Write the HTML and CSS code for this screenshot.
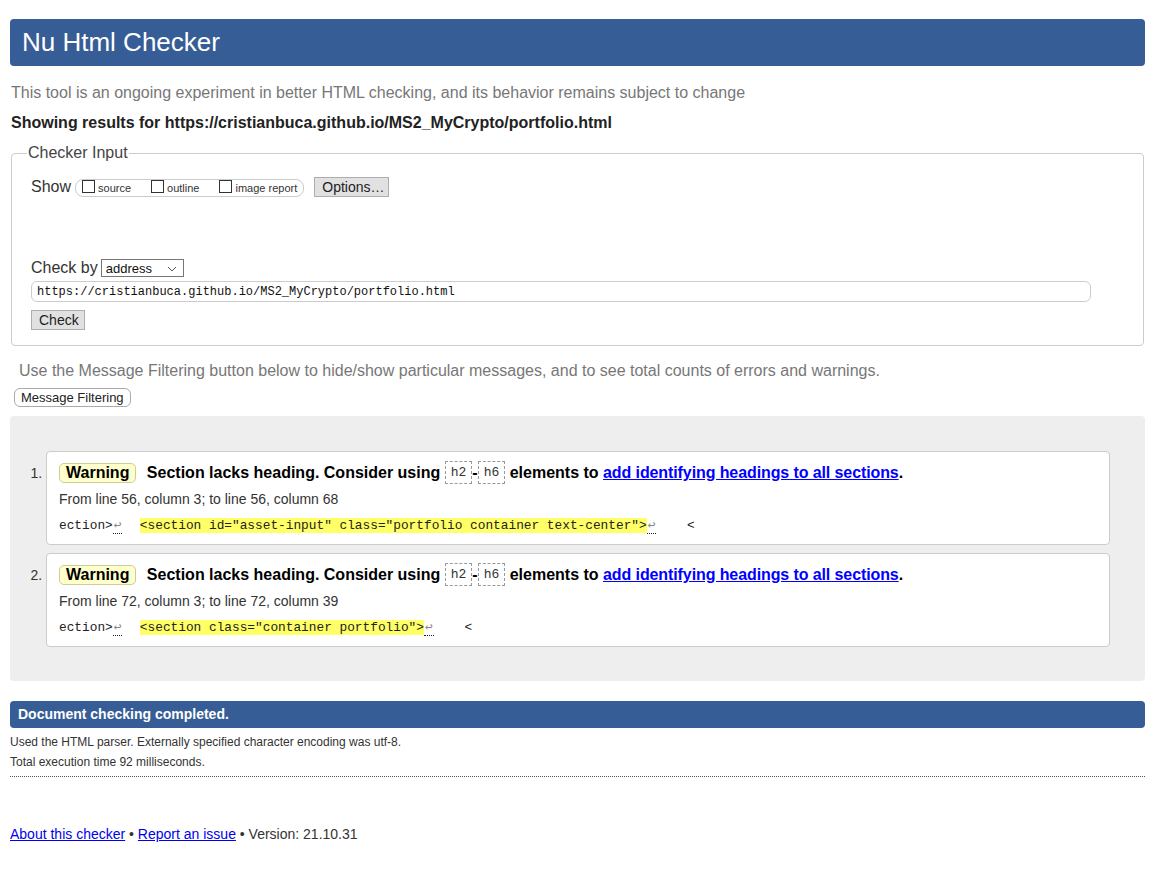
FILE: index.html
```html
<!DOCTYPE html>
<html lang="en">
<head>
<meta charset="utf-8">
<title>Nu Html Checker</title>
<link rel="stylesheet" href="styles.css">
</head>
<body>
<h1 class="title">Nu Html Checker</h1>
<p class="intro">This tool is an ongoing experiment in better HTML checking, and its behavior remains subject to change</p>
<p class="results-for">Showing results for https://cristianbuca.github.io/MS2_MyCrypto/portfolio.html</p>
<form class="checker-form">
  <fieldset class="checker-input">
    <legend>Checker Input</legend>
    <div class="show-row">
      <span class="show-label">Show</span>
      <span class="show-group">
        <label class="opt"><span class="box"></span>source</label>
        <label class="opt"><span class="box"></span>outline</label>
        <label class="opt"><span class="box"></span>image report</label>
      </span>
      <button type="button" class="btn">Options…</button>
    </div>
    <div class="checkby-row">
      <span class="checkby-label">Check by</span>
      <span class="select">address<svg class="chev" width="10" height="6" viewBox="0 0 10 6"><path d="M1 1l4 4 4-4" fill="none" stroke="#555" stroke-width="1"/></svg></span>
    </div>
    <div class="url">https://cristianbuca.github.io/MS2_MyCrypto/portfolio.html</div>
    <button type="button" class="btn check-btn">Check</button>
  </fieldset>
</form>
<p class="filter-note">Use the Message Filtering button below to hide/show particular messages, and to see total counts of errors and warnings.</p>
<button type="button" class="filter-btn">Message Filtering</button>
<div class="results">
  <ol class="messages">
    <li class="msg">
      <p class="msg-head"><span class="badge">Warning</span> <span>Section lacks heading. Consider using <code class="el">h2</code>-<code class="el">h6</code> elements to <a href="#">add identifying headings to all sections</a>.</span></p>
      <p class="loc">From line 56, column 3; to line 56, column 68</p>
      <p class="extract"><code>ection&gt;<span class="lf">↩</span>  <b class="hl">&lt;section id="asset-input" class="portfolio container text-center"&gt;</b><span class="lf">↩</span>    &lt;</code></p>
    </li>
    <li class="msg">
      <p class="msg-head"><span class="badge">Warning</span> <span>Section lacks heading. Consider using <code class="el">h2</code>-<code class="el">h6</code> elements to <a href="#">add identifying headings to all sections</a>.</span></p>
      <p class="loc">From line 72, column 3; to line 72, column 39</p>
      <p class="extract"><code>ection&gt;<span class="lf">↩</span>  <b class="hl">&lt;section class="container portfolio"&gt;</b><span class="lf">↩</span>    &lt;</code></p>
    </li>
  </ol>
</div>
<p class="done">Document checking completed.</p>
<div class="details">
  <p>Used the HTML parser. Externally specified character encoding was utf-8.</p>
  <p>Total execution time 92 milliseconds.</p>
</div>
<p class="footer"><a href="#">About this checker</a> • <a href="#">Report an issue</a> • Version: 21.10.31</p>
</body>
</html>
```
FILE: styles.css
```css
html, body { margin: 0; padding: 0; }
body {
  font-family: "Liberation Sans", Arial, sans-serif;
  color: #222;
  background: #fff;
  padding: 19px 18px 0 10px;
}
p { margin: 0; }
.title {
  margin: 0;
  height: 47px;
  line-height: 47px;
  background: #365d95;
  color: #fff;
  font-weight: normal;
  font-size: 26px;
  padding-left: 12px;
  border-radius: 4px;
}
.intro {
  margin: 17px 0 0 1px;
  font-size: 16px;
  line-height: 20px;
  color: #777;
}
.results-for {
  margin: 10px 0 0 1px;
  font-size: 16px;
  line-height: 20px;
  font-weight: bold;
}
.checker-form { margin: 10px 0 0 1px; width: 1133px; }
.checker-input {
  margin: 0;
  border: 1px solid #ccc;
  border-radius: 4px;
  padding: 14px 18px 15px 19px;
}
.checker-input legend {
  font-size: 16px;
  line-height: 20px;
  color: #444;
  padding: 0 1px;
  margin-left: -4px;
}
.show-row {
  display: flex;
  align-items: center;
  height: 20px;
}
.show-label { font-size: 16px; color: #333; margin-right: 4px; }
.show-group {
  display: flex;
  align-items: center;
  height: 16px;
  border: 1px solid #ccc;
  border-radius: 8px;
  padding: 0 6px 0 6px;
  margin-top: 1px;
}
.opt {
  display: flex;
  align-items: center;
  font-size: 11px;
  color: #333;
  margin-right: 20px;
}
.opt:last-child { margin-right: 0; }
.box {
  width: 11px;
  height: 11px;
  border: 1px solid #333;
  background: #fff;
  margin-right: 3px;
  margin-top: -2px;
}
.btn {
  font-family: "Liberation Sans", Arial, sans-serif;
  font-size: 14px;
  height: 20px;
  padding: 0 7px;
  background: #e1e1e1;
  border: 1px solid #adadad;
  border-radius: 0;
  color: #222;
  line-height: 18px;
}
.show-row .btn { margin-left: 10px; width: 75px; }
.checkby-row {
  display: flex;
  align-items: center;
  height: 20px;
  margin-top: 61px;
}
.checkby-label { font-size: 16px; color: #333; margin-right: 3px; }
.select {
  display: flex;
  align-items: center;
  justify-content: space-between;
  box-sizing: border-box;
  width: 83px;
  height: 18px;
  border: 1px solid #767676;
  font-size: 13px;
  padding: 0 6px 0 4px;
  color: #111;
}
.chev { margin-top: 1px; }
.url {
  margin-top: 3px;
  width: 1060px;
  box-sizing: border-box;
  height: 21px;
  line-height: 20px;
  border: 1px solid #ccc;
  border-radius: 6px;
  font-family: "Liberation Mono", "DejaVu Sans Mono", monospace;
  font-size: 12px;
  padding-left: 5px;
  color: #111;
}
.check-btn { margin-top: 8px; width: 54px; display: block; }
.filter-note {
  margin: 15px 0 0 9px;
  font-size: 16px;
  line-height: 20px;
  color: #777;
}
.filter-btn {
  display: block;
  margin: 7px 0 0 4px;
  height: 19px;
  padding: 0 6px;
  font-family: "Liberation Sans", Arial, sans-serif;
  font-size: 13px;
  line-height: 17px;
  background: #fff;
  border: 1px solid #aaa;
  border-radius: 6px;
  color: #222;
}
.results {
  margin-top: 9px;
  background: #eee;
  border-radius: 4px;
  padding: 35px 35px 34px 36px;
}
.messages {
  margin: 0;
  padding: 0;
  list-style: decimal;
  list-style-position: outside;
}
.msg {
  background: #fff;
  border: 1px solid #ccc;
  border-radius: 4px;
  padding: 10px 12px 8px 12px;
  font-size: 14px;
  color: #333;
}
.msg + .msg { margin-top: 8px; }
.msg::marker { font-size: 14px; color: #333; }
.msg-head {
  font-size: 16px;
  font-weight: bold;
  line-height: 22px;
  color: #000;
}
.badge {
  display: inline-block;
  background: #ffc;
  border: 1px solid #cc9;
  border-radius: 5px;
  padding: 0 6px;
  line-height: 18px;
  margin-right: 6px;
  color: #000;
}
.el {
  display: inline-block;
  font-family: "Liberation Mono", "DejaVu Sans Mono", monospace;
  font-weight: normal;
  font-size: 13px;
  line-height: 21px;
  border: 1px dashed #999;
  padding: 0 5px;
  color: #333;
  vertical-align: middle;
  margin-top: -3px;
}
.msg-head a { color: #00f; text-decoration: underline; letter-spacing: -0.1px; }
.loc {
  margin-top: 5px;
  font-size: 14px;
  line-height: 20px;
  color: #333;
}
.extract {
  margin-top: 5px;
  line-height: 20px;
}
.extract code {
  font-family: "Liberation Mono", "DejaVu Sans Mono", monospace;
  font-size: 12.8px;
  white-space: pre;
  color: #222;
}
.lf {
  color: #888;
  border-bottom: 1px dotted #222;
  padding: 0 1px;
}
.hl {
  font-weight: normal;
  background: #ff6;
  margin-left: 2px;
}
.done {
  margin-top: 20px;
  height: 27px;
  line-height: 27px;
  background: #365d95;
  color: #fff;
  font-weight: bold;
  font-size: 14px;
  padding-left: 8px;
  border-radius: 4px;
}
.details {
  padding-top: 4px;
  padding-bottom: 4px;
  border-bottom: 1px dotted #555;
  font-size: 12px;
  line-height: 20px;
  color: #333;
}
.footer {
  margin-top: 47px;
  font-size: 14px;
  line-height: 20px;
  color: #333;
}
.footer a { color: #00e; text-decoration: underline; }
```
